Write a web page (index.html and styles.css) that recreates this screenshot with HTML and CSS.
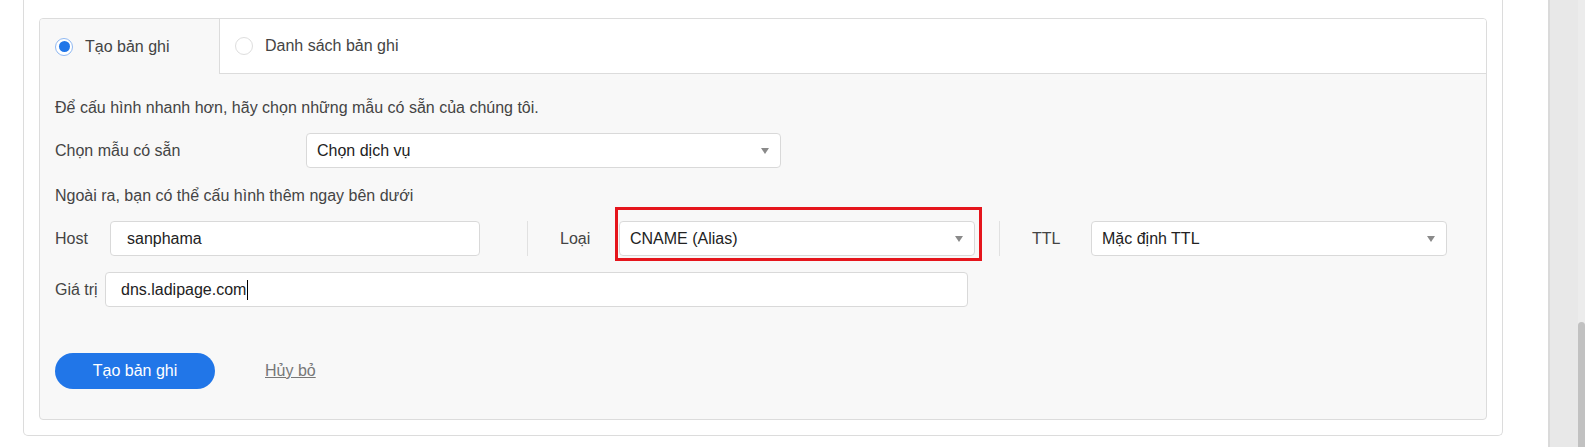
FILE: index.html
```html
<!DOCTYPE html>
<html lang="vi">
<head>
<meta charset="utf-8">
<title>Tạo bản ghi</title>
<link rel="stylesheet" href="styles.css">
</head>
<body>
<div class="page">
  <div class="main">
    <div class="outer-card">
      <div class="inner-card">
        <div class="tabs">
          <div class="tab tab-active">
            <span class="radio radio-on"></span>
            <span class="tab-label">Tạo bản ghi</span>
          </div>
          <div class="tab-rest">
            <div class="tab">
              <span class="radio"></span>
              <span class="tab-label">Danh sách bản ghi</span>
            </div>
          </div>
        </div>
        <div class="body">
          <p class="text">Để cấu hình nhanh hơn, hãy chọn những mẫu có sẵn của chúng tôi.</p>
          <div class="row row-template">
            <span class="label label-template">Chọn mẫu có sẵn</span>
            <div class="select select-template">
              <span class="value">Chọn dịch vụ</span>
              <span class="arrow"></span>
            </div>
          </div>
          <p class="text text-more">Ngoài ra, bạn có thể cấu hình thêm ngay bên dưới</p>
          <div class="grid">
            <div class="col col-first">
              <span class="label label-host">Host</span>
              <div class="input"><span class="value">sanphama</span></div>
            </div>
            <div class="col col-sep">
              <span class="label label-wide">Loại</span>
              <div class="select select-flex highlighted">
                <span class="value">CNAME (Alias)</span>
                <span class="arrow"></span>
                <span class="highlight"></span>
              </div>
            </div>
            <div class="col col-sep">
              <span class="label label-wide">TTL</span>
              <div class="select select-flex">
                <span class="value">Mặc định TTL</span>
                <span class="arrow"></span>
              </div>
            </div>
          </div>
          <div class="row row-value">
            <span class="label label-value">Giá trị</span>
            <div class="input input-value"><span class="value">dns.ladipage.com</span><span class="caret"></span></div>
          </div>
          <div class="actions">
            <button class="btn-primary" type="button">Tạo bản ghi</button>
            <a class="link-cancel" href="#">Hủy bỏ</a>
          </div>
        </div>
      </div>
    </div>
  </div>
  <div class="side">
    <div class="side-fill"></div>
    <div class="scroll-track">
      <div class="scroll-space"></div>
      <div class="scroll-thumb"></div>
    </div>
  </div>
</div>
</body>
</html>
```

FILE: styles.css
```css
* { box-sizing: border-box; }
html, body { margin: 0; padding: 0; background: #fff; }
body {
  font-family: "Liberation Sans", Arial, sans-serif;
  font-size: 16px;
  line-height: 20px;
  color: #444;
}
.page {
  display: flex;
  height: 447px;
  overflow: hidden;
}
.main {
  flex: 1;
  padding-left: 23px;
  padding-right: 45px;
}
.outer-card {
  height: 436px;
  background: #fff;
  border: 1px solid #dcdcdc;
  border-top: none;
  border-radius: 0 0 5px 5px;
  padding: 18px 15px 15px 15px;
}
.inner-card {
  height: 402px;
  border: 1px solid #dcdcdc;
  border-radius: 4px;
  background: #f8f8f8;
  display: flex;
  flex-direction: column;
  overflow: hidden;
}
.tabs {
  display: flex;
  height: 55px;
}
.tab {
  display: flex;
  align-items: center;
  gap: 12px;
  padding-left: 15px;
  height: 54px;
}
.tab-active {
  width: 180px;
  height: 55px;
  background: #f8f8f8;
  border-right: 1px solid #dcdcdc;
}
.tab-rest {
  flex: 1;
  background: #fff;
  border-bottom: 1px solid #dcdcdc;
  height: 55px;
}
.tab-label { color: #444; }
.radio {
  width: 18px;
  height: 18px;
  border-radius: 50%;
  border: 1px solid #dedede;
  background: #fff;
  display: flex;
  align-items: center;
  justify-content: center;
  flex: none;
}
.radio-on {
  border: 1.5px solid #8fb8f2;
}
.radio-on::after {
  content: "";
  width: 11px;
  height: 11px;
  border-radius: 50%;
  background: #2176e8;
}
.body {
  flex: 1;
  padding: 24px 15px 30px 15px;
}
.text {
  margin: 0;
  height: 20px;
  color: #444;
}
.text-more { margin-top: 18px; }
.row {
  display: flex;
  align-items: center;
}
.row-template { margin-top: 15px; }
.label { color: #444; flex: none; }
.label-template { width: 251px; }
.label-host { width: 55px; }
.label-wide { width: 59px; }
.label-value { width: 50px; }
.select, .input {
  position: relative;
  height: 35px;
  background: #fff;
  border: 1px solid #d9d9d9;
  border-radius: 4px;
  display: flex;
  align-items: center;
  color: #222;
}
.select { padding: 0 10px; justify-content: space-between; }
.input { padding: 0 15px; }
.select-template { width: 475px; }
.select-flex { flex: 1; }
.input-value { width: 863px; padding-left: 15px; }
.col-first .input { flex: 1; padding-left: 16px; }
.value { white-space: nowrap; }
.arrow {
  width: 0;
  height: 0;
  border-left: 4.5px solid transparent;
  border-right: 4.5px solid transparent;
  border-top: 6px solid #8a8a8a;
  margin-right: 1px;
}
.highlight {
  position: absolute;
  top: -15px;
  left: -5px;
  right: -8px;
  bottom: -6px;
  border: 3px solid #e5151c;
  pointer-events: none;
}
.grid {
  display: grid;
  grid-template-columns: 1fr 1fr 1fr;
  margin-top: 15px;
}
.col {
  display: flex;
  align-items: center;
}
.col-first { padding-right: 47px; }
.col-sep {
  border-left: 1px solid #e1e1e1;
  padding-left: 32px;
  padding-right: 24px;
}
.row-value { margin-top: 16px; }
.caret {
  display: inline-block;
  width: 1px;
  height: 20px;
  background: #000;
  margin-left: 1px;
}
.actions {
  display: flex;
  align-items: center;
  gap: 50px;
  margin-top: 46px;
}
.btn-primary {
  width: 160px;
  height: 36px;
  border: none;
  border-radius: 18px;
  background: #2176e8;
  color: #fff;
  font-family: "Liberation Sans", Arial, sans-serif;
  font-size: 16px;
  padding: 0;
  cursor: pointer;
}
.link-cancel {
  color: #777;
  text-decoration: underline;
}
.side {
  width: 37px;
  display: flex;
  border-left: 2px solid #dadada;
  background: #e8e8e8;
}
.side-fill { flex: 1; }
.scroll-track {
  width: 7px;
  display: flex;
  flex-direction: column;
  background: #ececec;
}
.scroll-space { height: 322px; }
.scroll-thumb {
  flex: 1;
  background: #c1c1c1;
  border-radius: 4px 4px 0 0;
}
```
